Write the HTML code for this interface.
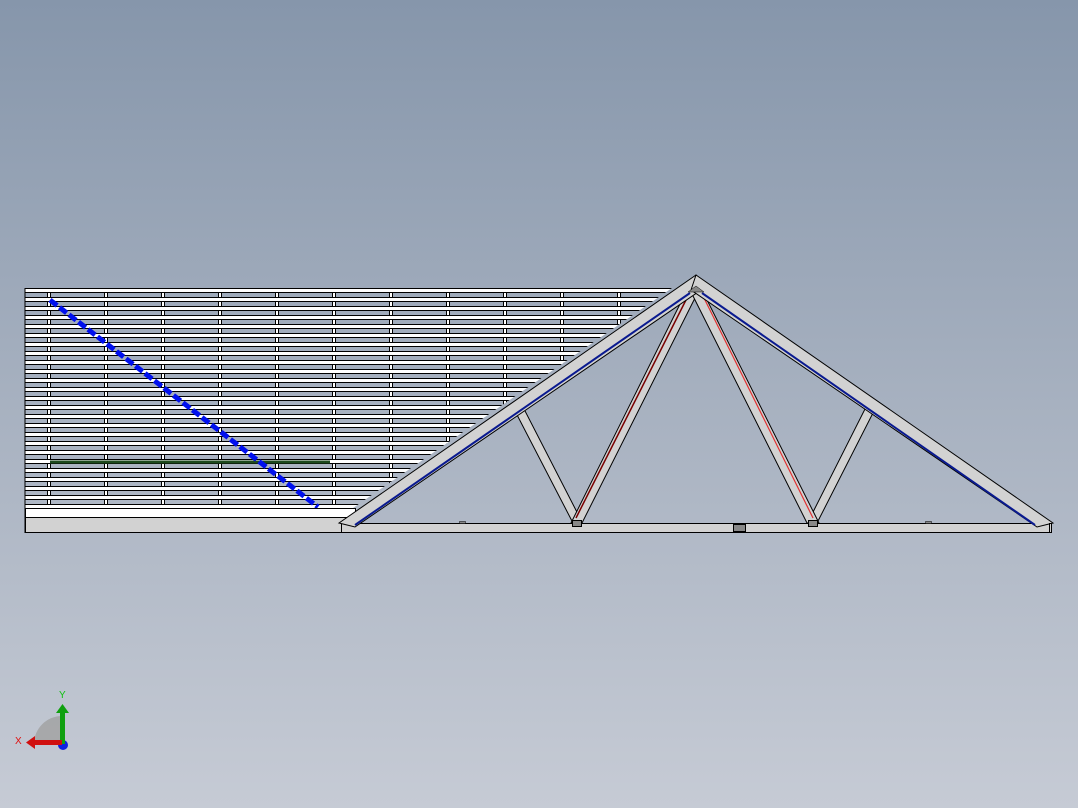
<!DOCTYPE html>
<html><head><style>
html,body{margin:0;padding:0;width:1078px;height:808px;overflow:hidden}
body{background:linear-gradient(#8696ab 0%,#a7b1c0 50%,#c6cbd5 100%)}
</style></head><body>
<svg width="1078" height="808" viewBox="0 0 1078 808" xmlns="http://www.w3.org/2000/svg" style="position:absolute;left:0;top:0">
<defs>
<pattern id="sl" x="0" y="288" width="10" height="9" patternUnits="userSpaceOnUse">
<rect x="0" y="0" width="10" height="1" fill="#000"/>
<rect x="0" y="1" width="10" height="3" fill="#fff"/>
<rect x="0" y="4" width="10" height="1" fill="#000"/>
</pattern>
<pattern id="po" x="47" y="0" width="57" height="10" patternUnits="userSpaceOnUse">
<rect x="0" y="0" width="4" height="10" fill="#000"/>
<rect x="1" y="0" width="2" height="10" fill="#fff"/>
</pattern>
<clipPath id="cp"><polygon points="25,288 672,288 353,508 25,508"/></clipPath>
</defs>
<g clip-path="url(#cp)">
<rect x="25" y="288" width="660" height="222" fill="url(#po)"/>
<rect x="25" y="288" width="660" height="222" fill="url(#sl)"/>
</g>
<line x1="25" y1="288" x2="25" y2="533" stroke="#000"/>
<line x1="50" y1="462" x2="330" y2="462" stroke="#1d4a1d" stroke-width="3"/>
<line x1="50" y1="300" x2="318" y2="507" stroke="#0010ee" stroke-width="5" stroke-dasharray="9,3"/>
<rect x="25.5" y="508.5" width="330" height="9" fill="#fff" stroke="#000"/>
<rect x="25.5" y="517.5" width="320" height="15" fill="#d2d2d2" stroke="#000"/>
<rect x="341.5" y="523.5" width="709" height="9" fill="#d2d2d2" stroke="#000"/>
<g fill="#d2d2d2" stroke="#000" stroke-width="1">
<polygon points="515,411 523,407 581,520 573,523"/>
<polygon points="874,411 866,407 809,520 817,523"/>
<polygon points="686,292 698,292 582,523 571,523"/>
<polygon points="691,292 703,292 819,523 807,523"/>
</g>
<line x1="688" y1="296" x2="576" y2="518" stroke="#7a0000" stroke-width="1.5"/>
<line x1="703" y1="296" x2="813" y2="518" stroke="#e03030" stroke-width="1.2"/>
<polygon points="339,523 696,275 701,290 355,527" fill="#d2d2d2" stroke="#000"/>
<polygon points="696,275 1053,523 1037,527 691,290" fill="#d2d2d2" stroke="#000"/>
<line x1="355" y1="525" x2="690" y2="293" stroke="#0a1a90" stroke-width="2"/>
<line x1="702" y1="293" x2="1035" y2="525" stroke="#0a1a90" stroke-width="2"/>
<polygon points="688,292 696,286 704,292" fill="#888" stroke="#000" stroke-width="0.5"/>
<rect x="1049.5" y="523.5" width="2" height="9" fill="#d2d2d2" stroke="#000"/>
<rect x="572.5" y="520.5" width="9" height="6" fill="#888" stroke="#000"/>
<rect x="808.5" y="520.5" width="9" height="6" fill="#888" stroke="#000"/>
<rect x="733.5" y="524.5" width="12" height="7" fill="#888" stroke="#000"/>
<rect x="459.5" y="521.5" width="6" height="2" fill="#888" stroke="#000" stroke-width="0.5"/>
<rect x="925.5" y="521.5" width="6" height="2" fill="#888" stroke="#000" stroke-width="0.5"/>
<path d="M62,716 A28,28 0 0 0 34,744 L62,744 Z" fill="#a0a0a0" opacity="0.8"/>
<circle cx="63" cy="745" r="5" fill="#1020e0"/>
<rect x="60" y="712" width="5" height="32" fill="#10a010"/>
<polygon points="56,713 62.5,704 69,713" fill="#10a010"/>
<rect x="34" y="740" width="28" height="5" fill="#d01010"/>
<polygon points="35,736 26,742.5 35,749" fill="#d01010"/>
<text x="59" y="698" font-family="Liberation Sans, sans-serif" font-size="10" fill="#10c010">Y</text>
<text x="15" y="744" font-family="Liberation Sans, sans-serif" font-size="10" fill="#e01010">X</text>
</svg>
</body></html>
